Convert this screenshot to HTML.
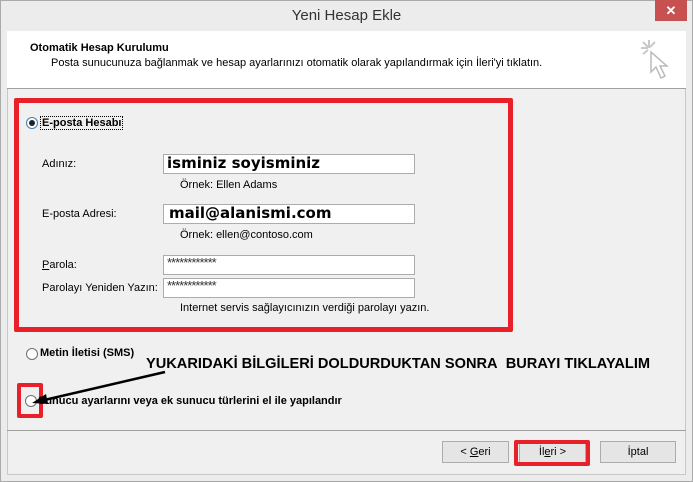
<!DOCTYPE html>
<html><head><meta charset="utf-8"><style>
*{margin:0;padding:0;box-sizing:border-box}
body{width:693px;height:482px;background:#fff;font-family:"Liberation Sans",sans-serif;font-size:11px;color:#000;position:relative;overflow:hidden}
.frame{position:absolute;left:0;top:0;width:693px;height:482px;background:#ececec;border:1px solid #aaa}
.abs{position:absolute}
.title{left:0;top:7px;width:693px;text-align:center;font-size:15px;color:#333}
.close{left:655px;top:0;width:32px;height:21px;background:#c75050;color:#fff;text-align:center;font-size:13px;line-height:21px;font-weight:bold}
.content{left:7px;top:31px;width:679px;height:444px;background:#f0f0f0;border:1px solid #c8c8c8}
.header{left:7px;top:31px;width:679px;height:58px;background:#fff;border-bottom:1px solid #a0a0a0}
.inp{background:#fff;border:1px solid #acacac;height:20px}
.red{border:5px solid #e8202a;border-radius:2px}
.radio{width:12px;height:12px;border-radius:50%;border:1px solid #707070;background:#fff}
.btn{border:1px solid #acacac;background:#e5e5e5;height:22px;text-align:center;line-height:20px;font-size:11px}
u{text-decoration:underline}
.big{font-weight:bold;font-size:15px;line-height:17px;font-family:'DejaVu Sans',sans-serif}
.pw{padding-left:3px;font-size:13px;line-height:13px;color:#333;letter-spacing:-1px}
</style></head><body>
<div class="frame"></div>
<div class="abs title">Yeni Hesap Ekle</div>
<div class="abs close">✕</div>
<div class="abs content"></div>
<div class="abs header"></div>
<div class="abs" style="left:30px;top:42px;font-weight:bold;font-size:11px">Otomatik Hesap Kurulumu</div>
<div class="abs" style="left:51px;top:57px">Posta sunucunuza bağlanmak ve hesap ayarlarınızı otomatik olarak yapılandırmak için İleri'yi tıklatın.</div>
<svg class="abs" style="left:636px;top:36px" width="40" height="50" viewBox="0 0 40 50"><g stroke="#c8c8c8" stroke-width="2" fill="none"><path d="M13 4v8M5 12h7M7 6l5 5M19 6l-5 5M7 18l5-4"/><path d="M15 16l0 20 5-5 5 11 4-2-5-10 7 0z" fill="#fff" stroke="#bbb" stroke-width="1.5"/></g></svg>
<div class="abs" style="left:7px;top:430px;width:679px;border-top:1px solid #a0a0a0"></div>

<div class="abs red" style="left:14px;top:98px;width:499px;height:234px"></div>
<div class="abs radio" style="left:26px;top:117px;border-color:#3c7fb1"></div>
<div class="abs" style="left:29px;top:120px;width:6px;height:6px;border-radius:50%;background:#222"></div>
<div class="abs" style="left:40px;top:116px;font-weight:bold;border:1px dotted #000;padding:0 1px">E-posta Hesabı</div>

<div class="abs" style="left:42px;top:158px">Adınız:</div>
<div class="abs inp big" style="left:163px;top:154px;width:252px;padding-left:3px">isminiz soyisminiz</div>
<div class="abs" style="left:180px;top:179px">Örnek: Ellen Adams</div>

<div class="abs" style="left:42px;top:208px">E-posta Adresi:</div>
<div class="abs inp big" style="left:163px;top:204px;width:252px;padding-left:5px">mail@alanismi.com</div>
<div class="abs" style="left:180px;top:229px">Örnek: ellen@contoso.com</div>

<div class="abs" style="left:42px;top:259px"><u>P</u>arola:</div>
<div class="abs inp pw" style="left:163px;top:255px;width:252px">************</div>
<div class="abs" style="left:42px;top:282px">Parolayı Yeniden Yazın:</div>
<div class="abs inp pw" style="left:163px;top:278px;width:252px">************</div>
<div class="abs" style="left:180px;top:302px">Internet servis sağlayıcınızın verdiği parolayı yazın.</div>

<div class="abs radio" style="left:26px;top:348px"></div>
<div class="abs" style="left:40px;top:347px;font-weight:bold">Metin İletisi (SMS)</div>
<div class="abs" style="left:146px;top:356px;font-weight:bold;font-size:14.6px;white-space:nowrap">YUKARIDAKİ BİLGİLERİ DOLDURDUKTAN SONRA&nbsp; BURAYI TIKLAYALIM</div>

<div class="abs red" style="left:17px;top:383px;width:26px;height:35px;border-width:4px"></div>
<div class="abs radio" style="left:25px;top:395px"></div>
<div class="abs" style="left:38px;top:395px;font-weight:bold">Sunucu ayarlarını veya ek sunucu türlerini el ile yapılandır</div>
<svg class="abs" style="left:28px;top:370px" width="140" height="40"><path d="M137 2L12 31" stroke="#000" stroke-width="2.5"/><path d="M4 33l14-9 2 10z" fill="#000"/></svg>

<div class="abs btn" style="left:442px;top:441px;width:67px">&lt; <u>G</u>eri</div>
<div class="abs btn" style="left:519px;top:441px;width:67px">İl<u>e</u>ri &gt;</div>
<div class="abs red" style="left:514px;top:440px;width:76px;height:26px;border-width:4px"></div>
<div class="abs btn" style="left:600px;top:441px;width:76px">İptal</div>
</body></html>
